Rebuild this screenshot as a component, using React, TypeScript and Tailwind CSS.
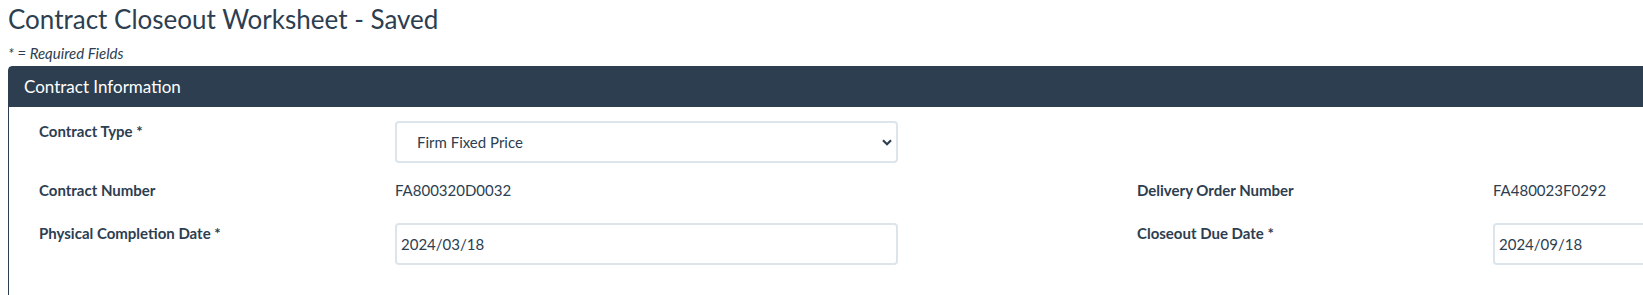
import React from "react";

const font = { fontFamily: "Lato, 'Open Sans', sans-serif" };

function Label({ children }: { children: React.ReactNode }) {
  return <div className="text-[15px] font-bold leading-[20px] text-[#2c3e50]">{children}</div>;
}

function TextBox({ value }: { value: string }) {
  return (
    <div className="flex h-[42px] w-[503px] items-center rounded-[4px] border-2 border-[#dce4ec] bg-white px-[4px] text-[15px] text-[#2c3e50]">
      {value}
    </div>
  );
}

export default function App() {
  return (
    <div className="h-[295px] w-full overflow-hidden bg-white" style={font}>
      <div className="w-[2150px] pl-[8px]">
        <h3 className="pt-[2px] text-[26px] leading-[34px] text-[#2c3e50]">Contract Closeout Worksheet - Saved</h3>
        <p className="mt-[8px] text-[15px] italic leading-[18px] text-[#2c3e50]">* = Required Fields</p>
        <div className="mt-[4px] rounded-t-[4px] border border-[#2c3e50]">
          <div className="flex h-[40px] items-center bg-[#2c3e50] px-[15px] text-[17px] text-white">Contract Information</div>
          <div className="px-[30px] pt-[14px] pb-[32px]">
            <div className="grid grid-cols-[356px_503px_239px_356px_503px] items-start">
              <Label>Contract Type *</Label>
              <div className="relative flex h-[42px] w-[503px] items-center rounded-[4px] border-2 border-[#dce4ec] bg-white pl-[20px] text-[15px] text-[#2c3e50]">
                Firm Fixed Price
                <svg className="absolute right-[4px] top-[16px]" width="10" height="7" viewBox="0 0 10 7">
                  <path d="M1 1.2 L5 5.2 L9 1.2" fill="none" stroke="#2c3e50" strokeWidth="2.2" />
                </svg>
              </div>
              <div />
              <div />
              <div />
            </div>
            <div className="mt-[17px] grid grid-cols-[356px_503px_239px_356px_503px] items-center text-[15px] leading-[20px] text-[#2c3e50]">
              <Label>Contract Number</Label>
              <div>FA800320D0032</div>
              <div />
              <Label>Delivery Order Number</Label>
              <div>FA480023F0292</div>
            </div>
            <div className="mt-[23px] grid grid-cols-[356px_503px_239px_356px_503px] items-start">
              <Label>Physical Completion Date *</Label>
              <TextBox value="2024/03/18" />
              <div />
              <Label>Closeout Due Date *</Label>
              <TextBox value="2024/09/18" />
            </div>
          </div>
        </div>
      </div>
    </div>
  );
}
